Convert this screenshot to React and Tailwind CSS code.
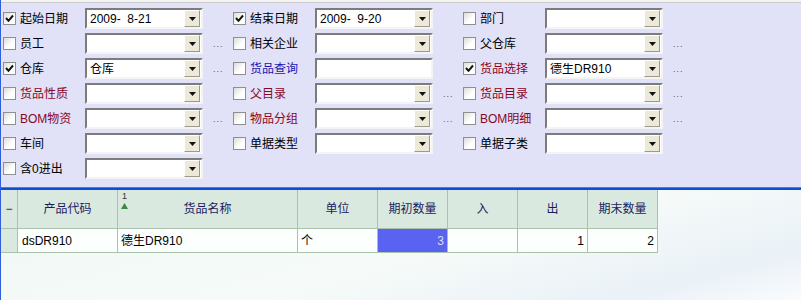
import React from 'react';

const rows = [
    [
        { on: true, label: '起始日期', value: '2009-  8-21' },
        { on: true, label: '结束日期', value: '2009-  9-20' },
        { label: '部门' },
    ],
    [
        { label: '员工', dots: true },
        { label: '相关企业' },
        { label: '父仓库', dots: true },
    ],
    [
        { on: true, label: '仓库', value: '仓库', dots: true },
        { label: '货品查询', tone: 'blue', plain: true },
        { on: true, label: '货品选择', tone: 'red', value: '德生DR910', dots: true },
    ],
    [
        { label: '货品性质', tone: 'red' },
        { label: '父目录', tone: 'red', dots: true },
        { label: '货品目录', tone: 'red', dots: true },
    ],
    [
        { label: 'BOM物资', tone: 'red', dots: true },
        { label: '物品分组', tone: 'red', dots: true },
        { label: 'BOM明细', tone: 'red', dots: true },
    ],
    [
        { label: '车间' },
        { label: '单据类型' },
        { label: '单据子类' },
    ],
    [{ label: '含0进出' }],
];

const tones = {
    black: 'text-black',
    red: 'text-[#8a0626]',
    blue: 'text-[#1717b4]',
};

const cols = [
    { title: '产品代码', w: 'w-[100px]' },
    { title: '货品名称', w: 'w-[180px]', sort: true },
    { title: '单位', w: 'w-[80px]' },
    { title: '期初数量', w: 'w-[70px]' },
    { title: '入', w: 'w-[70px]' },
    { title: '出', w: 'w-[70px]' },
    { title: '期末数量', w: 'w-[70px]' },
];

function Check({ on }) {
    return (
        <span className="w-[13px] h-[13px] shrink-0 border border-[#8e8f8f] bg-[linear-gradient(135deg,#dcdcd7,#ffffff_60%)] flex items-center justify-center">
            {on && (
                <svg width="9" height="9" viewBox="0 0 9 9">
                    <path d="M1 4 L3.5 6.8 L8 1.5" stroke="#111" strokeWidth="2" fill="none" />
                </svg>
            )}
        </span>
    );
}

function Combo({ value, plain }) {
    return (
        <div className="w-[118px] h-[21px] shrink-0 border-2 border-t-[#7c7c7c] border-l-[#7c7c7c] border-r-[#f4f4f4] border-b-[#f4f4f4] bg-white flex items-center">
            <span className="flex-1 pl-[3px] whitespace-pre leading-none truncate">{value}</span>
            {!plain && (
                <span className="w-[16px] h-[17px] mr-[1px] bg-[#ece9d8] border border-t-white border-l-white border-r-[#9d9a8c] border-b-[#9d9a8c] flex items-center justify-center">
                    <svg width="7" height="4" viewBox="0 0 7 4">
                        <path d="M0 0 H7 L3.5 4 Z" fill="#111" />
                    </svg>
                </span>
            )}
        </div>
    );
}

function Field({ on, label, tone = 'black', value, dots, plain }) {
    return (
        <div className="w-[230px] shrink-0 flex items-center">
            <div className="w-[82px] flex items-center gap-[4px]">
                <Check on={on} />
                <span className={tones[tone]}>{label}</span>
            </div>
            <Combo value={value} plain={plain} />
            {dots && <span className="ml-[10px] text-[9px] text-[#555] tracking-[1px] pt-[3px]">...</span>}
        </div>
    );
}

export default function App() {
    return (
        <div
            className="w-[801px] h-[300px] overflow-hidden flex flex-col border-l border-[#2f5fd9] text-[12px] text-black"
            style={{ fontFamily: '"Liberation Sans", "Noto Sans CJK SC", sans-serif' }}
        >
            <div className="h-[3px] shrink-0 bg-[#f3f3f3] border-b border-[#cacaca]" />

            <div className="h-[184px] shrink-0 bg-[#e1e1f7] pt-[5px] pl-[2px] flex flex-col gap-[4px]">
                {rows.map((row, i) => (
                    <div key={i} className="h-[21px] flex">
                        {row.map((f) => (
                            <Field key={f.label} {...f} />
                        ))}
                    </div>
                ))}
            </div>

            <div className="h-[3px] shrink-0 bg-[#0d4fd4] border-t border-[#4a7be3]" />

            <div className="flex-1 bg-[linear-gradient(165deg,#eef7f3_0%,#f6fbf9_55%,#eaf1f7_85%,#fafcfe_100%)]">
                <div className="flex h-[39px]">
                    <div className="w-[17px] shrink-0 bg-[#d9e9e0] border-r border-b border-[#a9c2a9] flex items-center justify-center text-[#222]">−</div>
                    {cols.map((c) => (
                        <div key={c.title} className={`${c.w} shrink-0 relative bg-[#d9e9e0] border-r border-b border-[#a9c2a9] flex items-center justify-center text-[#1c1c5c]`}>
                            {c.sort && (
                                <div className="absolute left-[3px] top-[2px] flex flex-col items-center leading-none gap-[2px]">
                                    <span className="text-[9px] text-[#333]">1</span>
                                    <svg width="7" height="6" viewBox="0 0 7 6">
                                        <path d="M3.5 0 L7 6 H0 Z" fill="#3c8a3c" />
                                    </svg>
                                </div>
                            )}
                            {c.title}
                        </div>
                    ))}
                </div>
                <div className="flex h-[24px]">
                    <div className="w-[17px] shrink-0 bg-[#d9e9e0] border-r border-b border-[#a9c2a9]" />
                    <div className="w-[100px] shrink-0 bg-[#fbfffd] border-r border-b border-[#a9c2a9] flex items-center pl-[4px]">dsDR910</div>
                    <div className="w-[180px] shrink-0 bg-[#fbfffd] border-r border-b border-[#a9c2a9] flex items-center pl-[3px]">德生DR910</div>
                    <div className="w-[80px] shrink-0 bg-[#fbfffd] border-r border-b border-[#a9c2a9] flex items-center pl-[3px]">个</div>
                    <div className="w-[70px] shrink-0 bg-[#5a62f2] border-r border-b border-[#a9c2a9] flex items-center justify-end pr-[3px] text-[#dcdcf0]">3</div>
                    <div className="w-[70px] shrink-0 bg-[#fbfffd] border-r border-b border-[#a9c2a9]" />
                    <div className="w-[70px] shrink-0 bg-[#fbfffd] border-r border-b border-[#a9c2a9] flex items-center justify-end pr-[3px]">1</div>
                    <div className="w-[70px] shrink-0 bg-[#fbfffd] border-r border-b border-[#a9c2a9] flex items-center justify-end pr-[3px]">2</div>
                </div>
            </div>
        </div>
    );
}
